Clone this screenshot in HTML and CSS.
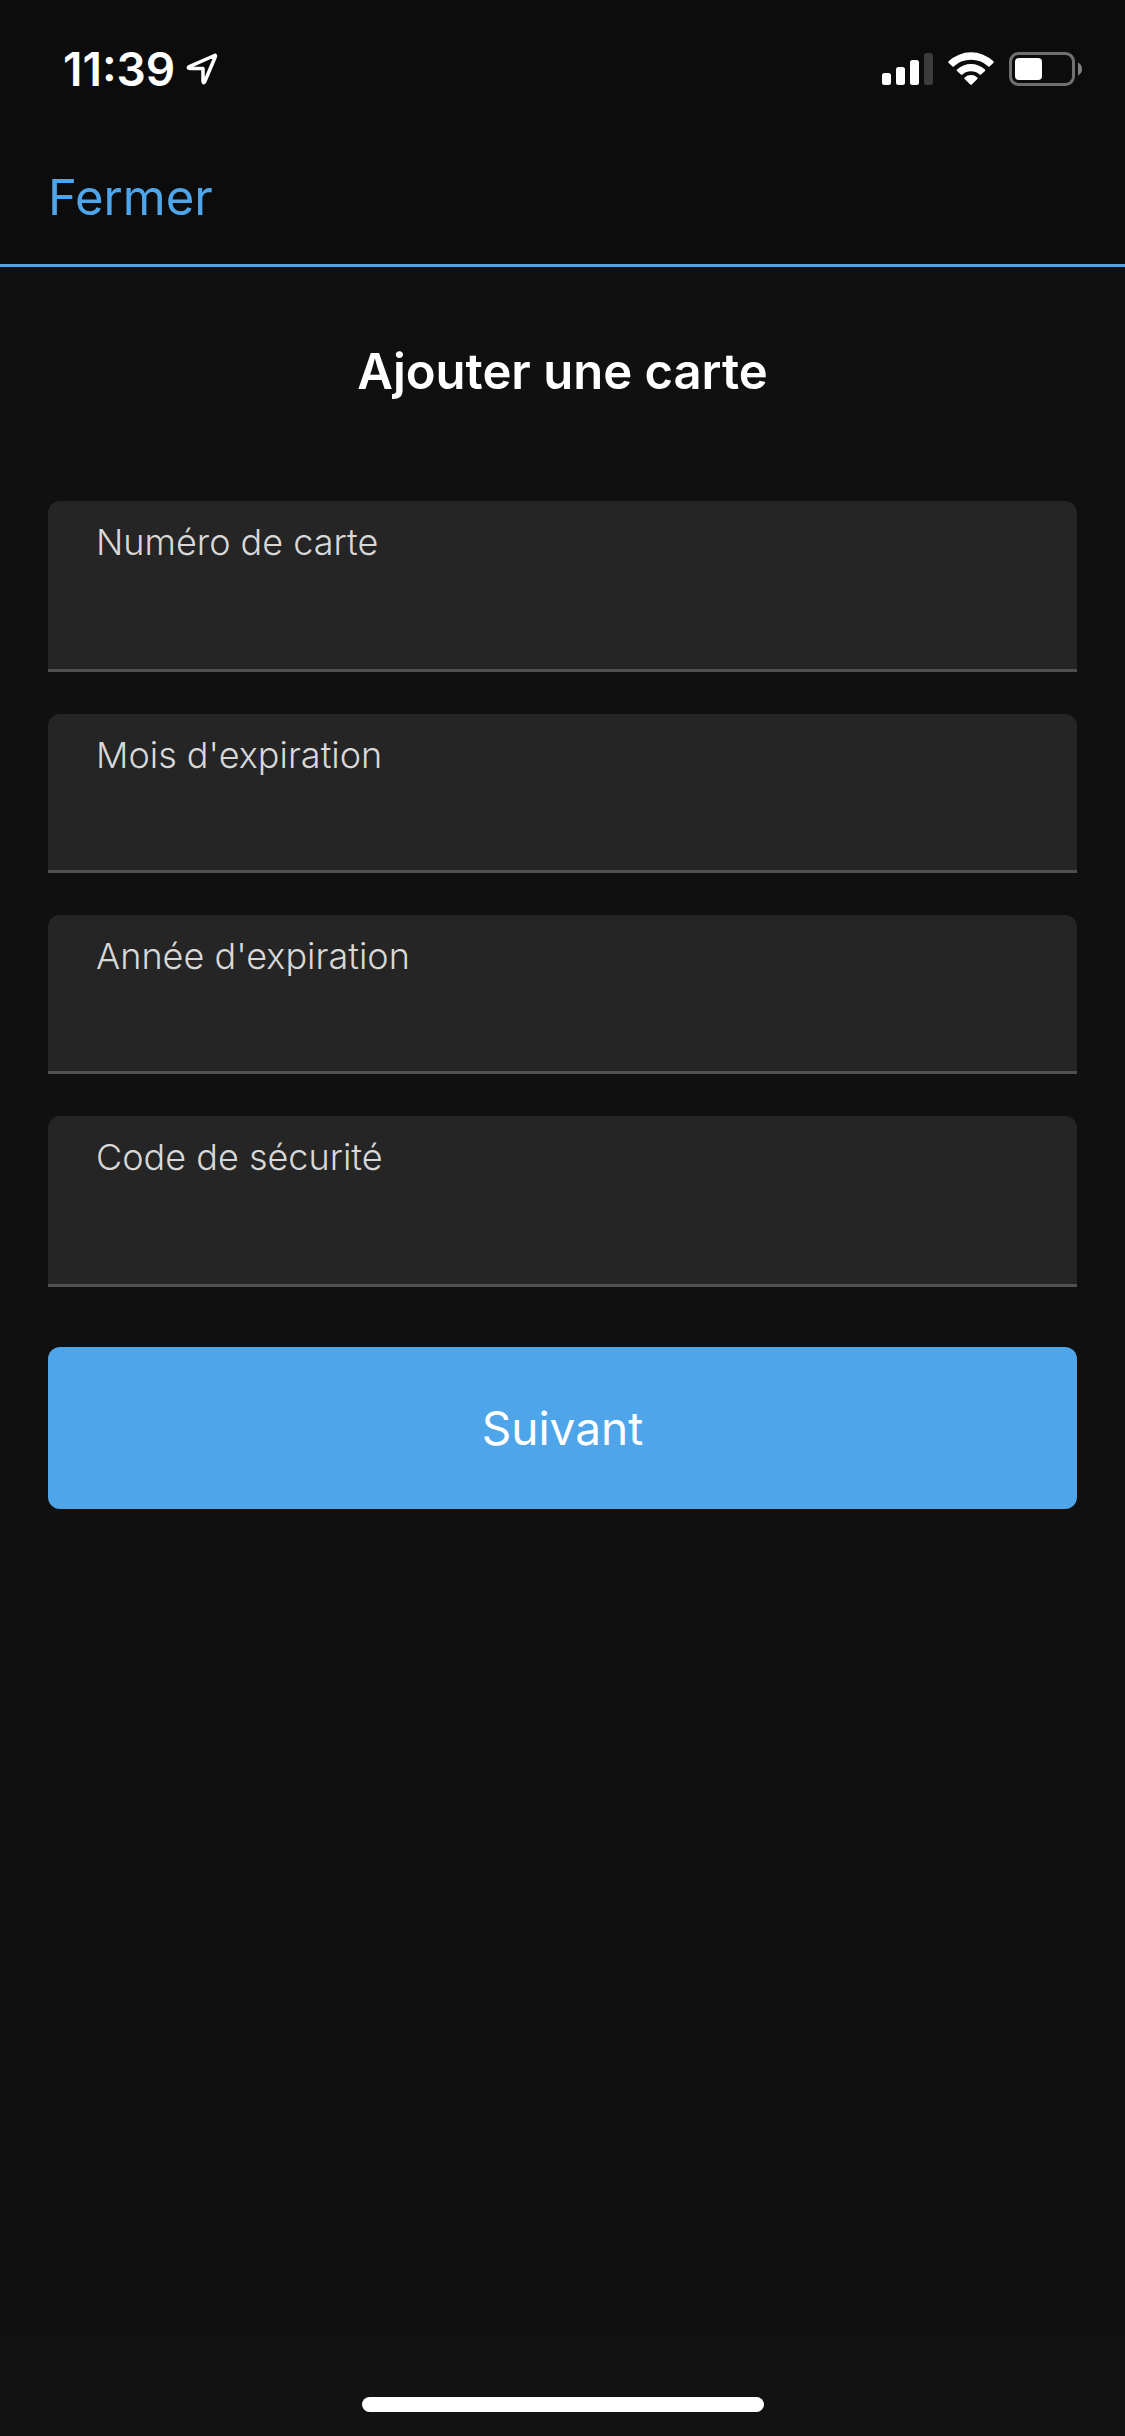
FILE: index.html
```html
<!DOCTYPE html>
<html lang="fr">
<head>
<meta charset="utf-8">
<meta name="viewport" content="width=device-width, initial-scale=1">
<title>Ajouter une carte</title>
<link rel="stylesheet" href="styles.css">
</head>
<body>
<div class="screen">
  <header class="top">
    <div class="status">
      <div class="status-group">
        <span class="time">11:39</span>
        <svg class="location" width="32" height="32" viewBox="0 0 32 32" aria-hidden="true"><path d="M28.500 2.500Q30 2 29.300 3.800L18.700 28.700Q17.500 31 17 28.500V15.500H3.800Q1 15 3.300 13.600Z" fill="none" stroke="#fff" stroke-width="3.500" stroke-linejoin="round"/></svg>
      </div>
      <div class="status-group status-icons">
        <svg width="51" height="34" viewBox="0 0 51 34" aria-hidden="true"><g fill="#fff"><rect y="21" width="9" height="12" rx="2.500"/><rect x="14" y="15" width="9" height="18" rx="2.500"/><rect x="28" y="8" width="9" height="25" rx="2.500"/></g><rect x="42" y="1" width="9" height="32" rx="2.500" fill="#3c3c3c"/></svg>
        <svg width="46" height="34" viewBox="0 0 46 34" aria-hidden="true"><g fill="#fff"><path d="M.600 9.300Q-.100 10.100.700 10.900L4.500 14.400Q5.200 15 6 14.300A25 25 0 0 1 40 14.300Q40.800 15 41.500 14.400L45.300 10.900Q46.100 10.100 45.400 9.300A32.500 32.500 0 0 0 .600 9.300Z"/><path d="M9 17.500Q8.300 18.300 9 19L12.900 22.500Q13.600 23.100 14.400 22.400A13 13 0 0 1 31.600 22.400Q32.400 23.100 33.100 22.500L37 19Q37.700 18.300 37 17.500A20.500 20.500 0 0 0 9 17.500Z"/><path d="M16.700 25.400Q15.900 26.200 16.700 27L22.200 32.500Q23 33.200 23.800 32.500L29.300 27Q30.100 26.200 29.300 25.400A9.500 9.500 0 0 0 16.700 25.400Z"/></g></svg>
        <svg width="73" height="34" viewBox="0 0 73 34" aria-hidden="true"><rect x="1.500" y="1.500" width="63" height="31" rx="8" fill="none" stroke="#707070" stroke-width="3"/><rect x="6" y="6" width="27" height="22" rx="4" fill="#fff"/><path d="M69 10.500Q73 12.500 73 17T69 23.500Z" fill="#808080"/></svg>
      </div>
    </div>
    <nav class="bar"><button class="close" type="button">Fermer</button></nav>
  </header>
  <main class="content">
    <h1 class="title">Ajouter une carte</h1>
    <form class="form">
      <div class="field field-tall">
        <label class="label" for="number">Numéro de carte</label>
        <input class="input" id="number" type="text" inputmode="numeric">
      </div>
      <div class="field">
        <label class="label" for="month">Mois d'expiration</label>
        <input class="input" id="month" type="text">
      </div>
      <div class="field">
        <label class="label" for="year">Année d'expiration</label>
        <input class="input" id="year" type="text">
      </div>
      <div class="field field-tall">
        <label class="label" for="code">Code de sécurité</label>
        <input class="input" id="code" type="text" inputmode="numeric">
      </div>
      <button class="submit" type="button">Suivant</button>
    </form>
  </main>
  <footer class="home"><div class="home-bar"></div></footer>
</div>
</body>
</html>
```
FILE: styles.css
```css
* {
  box-sizing: border-box;
}

body {
  margin: 0;
  background: #101010;
  color: #fff;
  font-family: Inter, "Liberation Sans", sans-serif;
}

button,
input {
  font: inherit;
  color: inherit;
  border: 0;
  margin: 0;
}

svg {
  display: block;
}

.screen {
  display: flex;
  flex-direction: column;
  min-height: 100vh;
}

.top {
  background: #0c0c0c;
  border-bottom: 3px solid #4ea5e9;
}

.status {
  display: flex;
  justify-content: space-between;
  align-items: center;
  height: 132px;
  padding: 6px 43px 0 63px;
}

.status-group {
  display: flex;
  align-items: center;
  gap: 11px;
}

.status-icons {
  gap: 15px;
}

.time {
  font-size: 46px;
  font-weight: 600;
  line-height: 54px;
}

.bar {
  display: flex;
  align-items: center;
  height: 132px;
  padding: 0 48px;
}

.close {
  padding: 0;
  background: none;
  color: #4ea5e9;
  font-size: 49px;
  line-height: 60px;
}

.content {
  flex: 1;
  padding: 75px 48px;
}

.title {
  margin: 0 0 99px;
  font-size: 49px;
  font-weight: 600;
  line-height: 60px;
  text-align: center;
}

.form {
  display: flex;
  flex-direction: column;
  gap: 42px;
}

.field {
  display: flex;
  flex-direction: column;
  height: 159px;
  padding-top: 20px;
  background: #252525;
  border-bottom: 3px solid #505050;
  border-radius: 12px 12px 0 0;
}

.field-tall {
  height: 171px;
}

.label {
  padding: 0 48px;
  color: #d8d8d8;
  font-size: 36px;
  font-weight: 300;
  line-height: 42px;
}

.input {
  flex: 1;
  width: 100%;
  min-height: 0;
  padding: 0 48px;
  background: none;
  font-size: 46px;
  outline: 0;
}

.submit {
  height: 162px;
  margin-top: 18px;
  background: #4ea5e9;
  border-radius: 12px;
  font-size: 46px;
}

.home {
  display: flex;
  justify-content: center;
  align-items: flex-end;
  height: 102px;
  padding-bottom: 24px;
  background: #121212;
}

.home-bar {
  width: 402px;
  height: 15px;
  background: #fff;
  border-radius: 8px;
}
```
